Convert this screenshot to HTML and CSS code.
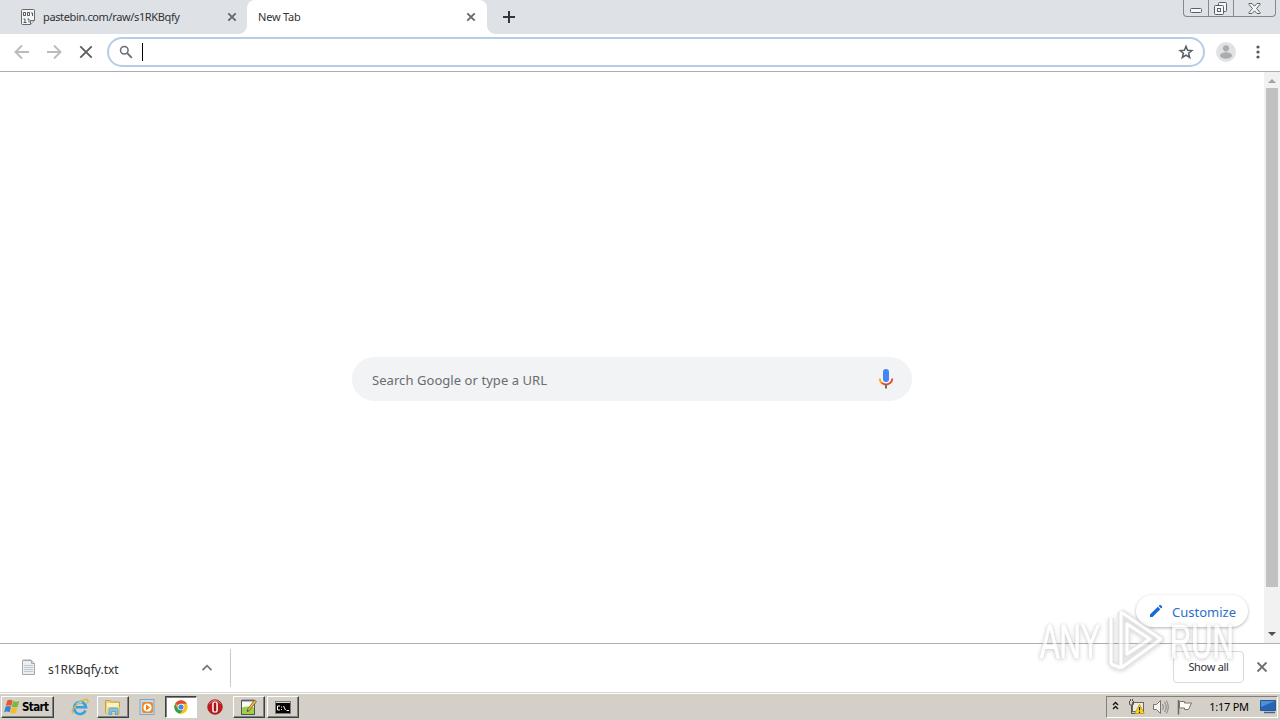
FILE: index.html
```html
<!DOCTYPE html>
<html lang="en">
<head>
<meta charset="UTF-8">
<title>New Tab</title>
<link rel="stylesheet" href="styles.css">
</head>
<body>
    <div class="tab-strip">
        <div class="tab">
            <svg class="favicon" width="16" height="17" viewBox="0 0 16 17">
                <path d="M2.500 .5h11q1 0 1 1v10l-4 4h-8q-1 0-1-1v-13q0-1 1-1z" fill="#f4f5f6" stroke="#66696d"/>
                <path d="M10.500 15.500v-4h4" fill="#ddd" stroke="#66696d"/>
                <path d="M3.500 3.500h2v3h-2zM7.500 3.500h2v3h-2zM11 4h1.500v3M3.500 10H5v3.500M3.500 13.500h3M7.500 10H9v3.500" fill="none" stroke="#333" stroke-width=".8"/>
            </svg>
            <span class="tab-title">pastebin.com/raw/s1RKBqfy</span>
            <svg class="tab-close" width="10" height="10" viewBox="0 0 10 10"><path d="M1.300 1.300l7.400 7.400M8.700 1.300l-7.400 7.400"/></svg>
        </div>
        <div class="tab active">
            <span class="tab-title new">New Tab</span>
            <svg class="tab-close" width="10" height="10" viewBox="0 0 10 10"><path d="M1.300 1.300l7.400 7.400M8.700 1.300l-7.400 7.400"/></svg>
        </div>
        <svg class="new-tab" width="12" height="12" viewBox="0 0 12 12"><path d="M6 0v12M0 6h12"/></svg>
        <div class="window-buttons">
            <span class="win min"><svg width="13" height="5" viewBox="0 0 13 5"><rect x=".5" y=".5" width="11" height="4" rx="1"/></svg></span>
            <span class="win max"><svg width="14" height="14" viewBox="0 0 14 14"><path d="M4.500 3.500v-2q0-1 1-1h6q1 0 1 1v7q0 1-1 1h-2"/><rect x=".5" y="3.500" width="9" height="9" rx="1"/><rect x="3.500" y="6.500" width="3" height="3"/></svg></span>
            <span class="win close"><svg width="13" height="11" viewBox="0 0 13 11"><path d="M1 .5h3l2.500 2.700L9 .5h3v1L8.500 5.500 12 9.500v1H9L6.500 7.800 4 10.500H1v-1l3.500-4L1 1.500z"/></svg></span>
        </div>
    </div>

    <div class="toolbar">
        <svg class="nav" width="16" height="16" viewBox="0 0 16 16"><path d="M15 8H2M8 1.500L1.500 8 8 14.500" stroke="#b9bbbe"/></svg>
        <svg class="nav" width="16" height="16" viewBox="0 0 16 16"><path d="M1 8h13M8 1.500L14.500 8 8 14.500" stroke="#b9bbbe"/></svg>
        <svg class="nav" width="16" height="16" viewBox="0 0 16 16"><path d="M2.300 2.300l11.400 11.400M13.700 2.300L2.300 13.700" stroke="#5c5f63"/></svg>
        <div class="omnibox">
            <svg width="14" height="14" viewBox="0 0 14 14"><circle cx="5.300" cy="5.300" r="3.800" fill="none" stroke="#6a6d71" stroke-width="1.500"/><path d="M8.200 8.200l4.600 4.600" stroke="#6a6d71" stroke-width="1.900"/></svg>
            <span class="caret"></span>
            <svg class="star" width="16" height="16" viewBox="0 0 16 16"><path d="M8 2.200l1.600 4 4.300.3-3.300 2.800 1.100 4.200L8 11.200l-3.700 2.300 1.100-4.200-3.300-2.800 4.300-.3z" fill="none" stroke="#5c5f63" stroke-width="1.500"/></svg>
        </div>
        <svg class="avatar" width="20" height="20" viewBox="0 0 20 20"><circle cx="10" cy="10" r="10" fill="#e1e2e4"/><circle cx="10" cy="6.300" r="3.100" fill="#abadaf"/><ellipse cx="10" cy="13.500" rx="6" ry="3.200" fill="#abadaf"/></svg>
        <svg class="dots" width="4" height="14" viewBox="0 0 4 14"><g fill="#55585c"><circle cx="2" cy="2" r="1.600"/><circle cx="2" cy="7" r="1.600"/><circle cx="2" cy="12" r="1.600"/></g></svg>
    </div>

    <div class="page">
        <div class="content">
            <div class="search-box">
                <span>Search Google or type a URL</span>
                <svg width="16" height="22" viewBox="0 0 16 22">
                    <rect x="5" y="1" width="6" height="13" rx="3" fill="#4285f4"/>
                    <path d="M1.700 10.500q.2 3 2.300 4.700" fill="none" stroke="#f9ab00" stroke-width="1.900"/>
                    <path d="M3.800 15q4.300 3 8.300.1 2-1.600 2.200-4.600" fill="none" stroke="#dc4b38" stroke-width="1.900"/>
                    <path d="M8 16.500V20.500" stroke="#6d7445" stroke-width="2"/>
                </svg>
            </div>
            <div class="customize">
                <svg width="14" height="14" viewBox="0 0 14 14"><path d="M1 10.500L8.800 2.700l2.500 2.500L3.500 13H1zM9.600 1.900l1-1q.5-.4 1 0l1.500 1.500q.4.500 0 1l-1 1z" fill="#1a66dc"/></svg>
                <span>Customize</span>
            </div>
        </div>
        <div class="scrollbar">
            <i class="arrow up"></i>
            <i class="thumb"></i>
            <i class="arrow down"></i>
        </div>
    </div>

    <div class="download-bar">
        <div class="download">
            <svg class="file-icon" width="15" height="18" viewBox="0 0 15 18"><path d="M1.500 2.500h9l3 3v11h-12z" fill="#eceff1" stroke="#a3a8ab"/><path d="M3 1v2M5 1v2M7 1v2M9 1v2M10.500 2.500v3h3" fill="none" stroke="#a6abae"/><path d="M3 7.500h9M3 9.500h9M3 11.500h9M3 13.500h9" stroke="#bec8ce"/></svg>
            <span class="file-name">s1RKBqfy.txt</span>
            <svg class="chevron" width="12" height="8" viewBox="0 0 12 8"><path d="M1.500 6.200L6 1.700l4.500 4.500" fill="none" stroke="#777" stroke-width="1.800"/></svg>
        </div>
        <div class="show-all"><span>Show all</span></div>
        <svg class="bar-close" width="12" height="12" viewBox="0 0 12 12"><path d="M1.500 1.500l9 9M10.500 1.500l-9 9" stroke="#6f7174" stroke-width="1.800"/></svg>
    </div>

    <div class="taskbar">
        <div class="start">
            <svg width="17" height="16" viewBox="0 0 17 16"><path d="M3.300 1.500q2.500-1.500 5.300 0L7.300 7Q4.500 5.600 1.800 7z" fill="#e8562d"/><path d="M9.200 2q2.500 1.400 6 0l-1.500 5.700q-2.900 1.300-5.900 0z" fill="#79b843"/><path d="M1.500 7.700q2.700-1.400 5.500 0L5.700 13.300Q3 11.800.2 13.300z" fill="#3a84cb"/><path d="M7.600 8.300q2.900 1.400 5.900 0l-1.500 5.500q-2.700 1.300-5.800 0z" fill="#f6bd28"/></svg>
            <span>Start</span>
        </div>
        <div class="launcher ie">
            <svg width="18" height="18" viewBox="0 0 18 18"><path d="M14.500 12.500A6 6 0 1 1 15 9.300H5" fill="none" stroke="#36a2dd" stroke-width="2.600"/><path d="M2 15.500C-2 13 9 1 15.500 1.500q2.500.5.800 4" fill="none" stroke="#ddb640" stroke-width="1.300"/><path d="M5 6q3-3.200 6.500-1.300" fill="none" stroke="#8ed6f5" stroke-width="1"/></svg>
        </div>
        <div class="launcher raised folder">
            <svg width="18" height="18" viewBox="0 0 18 18"><path d="M1.500 2.500h5l1 1.500h8v11h-14z" fill="#edce70" stroke="#c7a24b"/><path d="M3 5h11.500v6H3z" fill="#fbf2c2"/><path d="M2 9h13.500v6H2z" fill="#f2d988"/><path d="M5 16.500v-5q0-1.500 1.500-1.500h6q1.500 0 1.500 1.500v5h-2.500v-3h-4v3z" fill="#81c3e5" stroke="#559dc4" stroke-width=".8"/></svg>
        </div>
        <div class="launcher media">
            <svg width="16" height="18" viewBox="0 0 16 18"><rect x="1" y="1.500" width="14" height="15" fill="#c3daee" stroke="#7ca8cf"/><rect x="3" y="4" width="11" height="11" rx="2" fill="#f28c22"/><circle cx="8.500" cy="9.500" r="4" fill="#fff"/><path d="M7 6.500l4 3-4 3z" fill="#ef7d14"/></svg>
        </div>
        <div class="launcher pressed chrome">
            <svg width="14" height="14" viewBox="0 0 14 14"><circle cx="7" cy="7" r="6.700" fill="#fbc116"/><path d="M7 7L1.200 3.650A6.700 6.700 0 0 1 12.800 3.650H7z" fill="#df4937"/><path d="M7 7L4.100 8.700 1.200 3.650A6.700 6.700 0 0 0 6.200 13.650L9.800 8.500z" fill="#3a9e4e"/><circle cx="7" cy="7" r="3.300" fill="#fff"/><circle cx="7" cy="7" r="2.600" fill="#4284ee"/></svg>
        </div>
        <div class="launcher opera">
            <svg width="16" height="16" viewBox="0 0 16 16"><circle cx="8" cy="8" r="7.300" fill="#bd1b1f" stroke="#9c2225" stroke-width=".8"/><path d="M2.500 5q2-3.500 5.500-3.500t5.500 3.500" fill="none" stroke="#e77b78"/><rect x="5.200" y="2.500" width="5.600" height="11" rx="2.600" fill="#fff"/><rect x="6.700" y="3.500" width="2.600" height="9" rx="1.200" fill="#a51518"/></svg>
        </div>
        <div class="launcher raised notepad">
            <svg width="18" height="18" viewBox="0 0 18 18"><rect x="1.500" y="2.500" width="13" height="14" fill="#fbfcf7" stroke="#55594e"/><path d="M3 1v3M5 1v3M7 1v3M9 1v3M11 1v3M13 1v3" stroke="#777"/><path d="M2 9.500q6-2 12 0V16H2z" fill="#9bd04b"/><path d="M7 12L14.500 2l2 1.500L9 13z" fill="#e8b63d" stroke="#6d562b" stroke-width=".7"/><path d="M7 12v2l2-1z" fill="#444"/></svg>
        </div>
        <div class="launcher raised cmd">
            <svg width="16" height="13" viewBox="0 0 16 13"><rect x=".5" y=".5" width="15" height="12" fill="#050505" stroke="#777"/><path d="M1 1.500h14" stroke="#d4d4d4"/><path d="M5 5H2.500v4H5M6.500 5.500v1M6.500 8v1M8.500 5l2 4M11.500 9.500h2.500" fill="none" stroke="#fff"/></svg>
        </div>
        <div class="tray">
            <svg class="expand" width="7" height="9" viewBox="0 0 7 9"><path d="M1 4l2.500-2.500L6 4M1 8l2.500-2.500L6 8" fill="none" stroke="#111" stroke-width="1.300"/></svg>
            <svg class="net" width="17" height="16" viewBox="0 0 17 16"><rect x="4.500" y="3.500" width="11" height="9" fill="#eceae3" stroke="#686763"/><path d="M1.500 2v3q0 1 1 1h2q1 0 1-1V2M2.500 0v2M4.500 0v2M3.500 6v8.500h4" fill="none" stroke="#55544f"/><path d="M11.500 5.500l4.700 9H6.800z" fill="#ffdc28" stroke="#b99200" stroke-width=".8"/><path d="M11.500 8v3.500M11.500 12.500V14" stroke="#222" stroke-width="1.200"/></svg>
            <svg class="sound" width="17" height="16" viewBox="0 0 17 16"><path d="M1.500 5.500h3l4-4v13l-4-4h-3z" fill="#f6f5f2" stroke="#75736f"/><path d="M10.500 5q2 3 0 6M12.500 3q3.500 5 0 10M14.300 1.500q4 6.500 0 13" fill="none" stroke="#85837f"/></svg>
            <svg class="flag" width="17" height="16" viewBox="0 0 17 16"><path d="M2.500 1v14.500" stroke="#6b6966" stroke-width="1.500"/><path d="M3.500 2.500h5v1.500h7l-3 6.500h-4V9h-5z" fill="#fbfaf7" stroke="#777570"/></svg>
            <span class="clock">1:17 PM</span>
            <svg class="desktop" width="16" height="14" viewBox="0 0 16 14"><path d="M.5.500h15v10H.5z" fill="#2764b5" stroke="#2a5698"/><path d="M1 1h14L1 7z" fill="#4c90da"/><path d="M4 12.500h11" stroke="#43658a" stroke-width="1.500"/></svg>
        </div>
    </div>

    <!-- translucent ANY.RUN mark -->
    <div class="watermark">
        <span>ANY</span>
        <svg width="64" height="68" viewBox="0 0 64 68"><g fill="none" stroke-linejoin="round"><path d="M16 5L56 32 16 61M6 11v46M16 5v56M22 17v30L45 32zM6 57l10 4" stroke="#d6d6d6" stroke-width="6"/><path d="M16 5L56 32 16 61M6 11v46M16 5v56M22 17v30L45 32zM6 57l10 4" stroke="#fff" stroke-width="3"/></g></svg>
        <span>RUN</span>
    </div>
</body>
</html>
```
FILE: styles.css
```css
* {
    box-sizing: border-box;
}

body {
    margin: 0;
    width: 1280px;
    height: 720px;
    overflow: hidden;
    position: relative;
    display: flex;
    flex-direction: column;
    background: #fff;
    font-family: "Noto Sans", sans-serif;
    color: #303236;
}

svg {
    display: block;
    flex: none;
}

span {
    white-space: nowrap;
}

.tab-strip {
    height: 34px;
    flex: none;
    display: flex;
    background: #dee1e6;
}

.tab {
    width: 247px;
    height: 34px;
    display: flex;
    align-items: center;
    padding: 0 10px 0 20px;
}

.tab.active {
    width: 240px;
    padding: 0 11px;
    background: #fff;
    border-radius: 8px 8px 0 0;
    position: relative;
}

.tab.active::before,
.tab.active::after {
    content: "";
    position: absolute;
    bottom: 0;
    width: 8px;
    height: 8px;
}

.tab.active::before {
    left: -8px;
    background: radial-gradient(circle at 0 0, #dee1e6 7.5px, #fff 8px);
}

.tab.active::after {
    right: -8px;
    background: radial-gradient(circle at 100% 0, #dee1e6 7.5px, #fff 8px);
}

.tab-title {
    font-size: 11px;
    margin-left: 7px;
    padding-bottom: 2px;
    letter-spacing: -0.37px;
}

.tab-title.new {
    margin-left: 0;
    letter-spacing: -0.2px;
}

.tab-close {
    margin-left: auto;
}

.tab-close path {
    stroke: #64676b;
    stroke-width: 1.8;
}

.new-tab {
    margin: 11px 0 0 16px;
}

.new-tab path {
    stroke: #34363a;
    stroke-width: 2;
}

.window-buttons {
    display: flex;
    width: 93px;
    height: 17px;
    margin-left: auto;
    margin-right: 4px;
    border: 1px solid #85898f;
    border-top: 0;
    border-radius: 0 0 4px 4px;
}

.win {
    width: 25px;
    display: flex;
    justify-content: center;
    border-right: 1px solid #85898f;
}

.win svg {
    fill: #f6f7f8;
    stroke: #5b5e66;
}

.win.close {
    flex: 1;
    border: 0;
}

.min svg {
    margin-top: 8px;
}

.max svg {
    margin-top: 2px;
}

.close svg {
    margin-top: 3px;
}

.toolbar {
    height: 38px;
    flex: none;
    display: flex;
    align-items: center;
    padding: 0 20px 2px 14px;
    border-bottom: 1px solid #adadad;
}

.nav {
    margin-right: 16px;
}

.nav:nth-child(3) {
    margin-right: 13px;
}

.nav path {
    fill: none;
    stroke-width: 1.9;
}

.omnibox {
    width: 1098px;
    height: 30px;
    display: flex;
    align-items: center;
    padding: 0 9px 0 10px;
    border: 2px solid #b7cce9;
    border-radius: 15px;
}

.caret {
    width: 1px;
    height: 18px;
    margin-left: 9px;
    background: #000;
}

.star {
    margin-left: auto;
}

.avatar {
    margin-left: 11px;
}

.dots {
    margin-left: auto;
}

.page {
    height: 571px;
    flex: none;
    display: flex;
}

.content {
    width: 1264px;
    display: flex;
    flex-direction: column;
    align-items: center;
    padding-top: 285px;
}

.search-box {
    width: 560px;
    height: 44px;
    display: flex;
    align-items: center;
    justify-content: space-between;
    padding: 0 18px 0 20px;
    background: #f1f3f4;
    border-radius: 22px;
    font-size: 13px;
    letter-spacing: 0.06px;
    color: #686d71;
}

.search-box span {
    padding-top: 2px;
}

.customize {
    width: 112px;
    height: 32px;
    margin: auto 16px 16px auto;
    display: flex;
    align-items: center;
    padding-left: 13px;
    gap: 9px;
    border-radius: 16px;
    box-shadow: 0 1px 3px rgba(60, 64, 67, 0.4);
    background: #fff;
    color: #2a6fca;
    font-size: 13px;
}

.customize span {
    padding-top: 1px;
}

.scrollbar {
    width: 16px;
    display: flex;
    flex-direction: column;
    align-items: center;
    background: #f1f1f1;
}

.arrow {
    border: 4px solid transparent;
}

.arrow.up {
    border-top: 0;
    border-bottom-color: #a3a3a3;
    margin-top: 7px;
}

.thumb {
    width: 12px;
    height: 499px;
    margin-top: 5px;
    background: #c1c1c1;
}

.arrow.down {
    border-bottom: 0;
    border-top-color: #505050;
    margin: auto 0 7px;
}

.download-bar {
    height: 49px;
    flex: none;
    display: flex;
    align-items: center;
    border-top: 1px solid #b0b0b0;
}

.download {
    width: 231px;
    height: 38px;
    display: flex;
    align-items: center;
    padding-left: 21px;
    border-right: 1px solid #c9c9c9;
}

.file-icon {
    margin-bottom: 2px;
}

.file-name {
    margin: 3px 0 0 12px;
    font-size: 12px;
}

.chevron {
    margin: 0 17px 0 auto;
}

.show-all {
    width: 71px;
    height: 32px;
    margin: 0 12px 2px auto;
    border: 1px solid #d8dadd;
    border-radius: 4px;
    font-size: 11px;
    letter-spacing: -0.3px;
    line-height: 30px;
    text-align: center;
}

.bar-close {
    margin: 0 12px 2px 0;
}

.taskbar {
    height: 28px;
    flex: none;
    display: flex;
    align-items: center;
    padding: 1px 2px 0 1px;
    background: #d4d0c8;
    border-top: 1px solid #d9d6cf;
    box-shadow: inset 0 1px #fff;
}

.start,
.raised {
    border: 1px solid;
    border-color: #fff #404040 #404040 #fff;
    box-shadow: inset -1px -1px #808080;
}

.start {
    width: 53px;
    height: 22px;
    display: flex;
    align-items: center;
    gap: 1px;
    padding-left: 2px;
    margin-right: 13px;
    font: bold 11.5px "DejaVu Sans Condensed", "DejaVu Sans", sans-serif;
    letter-spacing: -0.6px;
    color: #000;
}

.launcher {
    height: 22px;
    display: flex;
    align-items: center;
    justify-content: center;
}

.ie {
    width: 25px;
}

.folder {
    width: 32px;
    margin-left: 5px;
}

.media {
    width: 36px;
}

.pressed {
    width: 32px;
    background: #fff;
    border: 1px solid;
    border-color: #404040 #fff #fff #404040;
    box-shadow: inset 1px 1px #808080;
}

.opera {
    width: 36px;
}

.notepad {
    width: 32px;
}

.cmd {
    width: 32px;
    margin-left: 2px;
}

.tray {
    width: 172px;
    height: 22px;
    display: flex;
    align-items: center;
    margin-left: auto;
    padding: 0 1px 0 5px;
    border: 1px solid;
    border-color: #808080 #fff #fff #808080;
}

.expand {
    margin-bottom: 3px;
}

.net {
    margin-left: 9px;
}

.sound,
.flag {
    margin-left: 7px;
}

.clock {
    margin: 0 auto;
    padding: 0 0 2px 5px;
    font-size: 11px;
    letter-spacing: -0.25px;
    color: #000;
}

.watermark {
    position: absolute;
    left: 1040px;
    top: 607px;
    width: 194px;
    display: flex;
    align-items: center;
    justify-content: space-between;
    opacity: 0.65;
    filter: drop-shadow(0 1px 2px rgba(0, 0, 0, 0.25));
}

.watermark span {
    width: 64px;
    font: 49px/66px "Liberation Sans", sans-serif;
    color: #fff;
    -webkit-text-stroke: 1px #fff;
    text-shadow: 0 0 2px #bbb, 0 0 3px #bbb;
    transform: scaleX(0.6);
    transform-origin: left;
}
```
